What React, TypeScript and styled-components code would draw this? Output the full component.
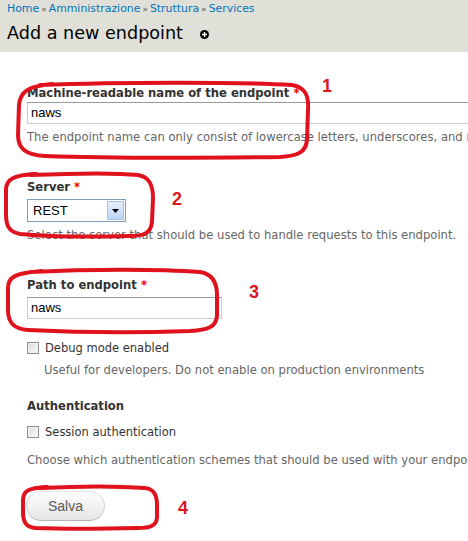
import { createGlobalStyle, styled } from 'styled-components';

const GlobalStyle = createGlobalStyle`
  html, body {
    margin: 0;
    padding: 0;
    background: #fff;
    overflow: hidden;
  }
  body {
    font-family: 'DejaVu Sans', Verdana, sans-serif;
    color: #333;
  }
`;

const Page = styled.div`
  position: relative;
  width: 468px;
  height: 541px;
  overflow: hidden;
`;

const Branding = styled.div`
  background: #e0e0d8;
  height: 52px;
  padding: 2px 0 0 7px;
  box-sizing: border-box;
`;

const Breadcrumb = styled.div`
  font-size: 10.9px;
  line-height: 13px;
  color: #0074bd;
`;

const Sep = styled.span`
  color: #555;
  margin: 0 2px;
  font-size: 9px;
`;

const TitleRow = styled.div`
  display: flex;
  align-items: center;
  margin-top: 5px;
`;

const Title = styled.h1`
  margin: 0;
  font-size: 17.6px;
  font-weight: normal;
  color: #000;
  line-height: 24px;
`;

const AddIcon = styled.svg`
  margin-left: 17px;
  margin-top: 3px;
`;

const Form = styled.div`
  padding: 33px 0 0 27px;
  display: flex;
  flex-direction: column;
  align-items: flex-start;
`;

const Label = styled.div<{ $gap?: number }>`
  font-size: 11.6px;
  font-weight: bold;
  line-height: 16px;
  color: #333;
  margin-top: ${(p) => p.$gap ?? 0}px;
  white-space: nowrap;
`;

const Req = styled.span`
  color: #e00;
`;

const TextBox = styled.div<{ $width: number; $gap: number }>`
  box-sizing: border-box;
  width: ${(p) => p.$width}px;
  height: 22px;
  margin-top: ${(p) => p.$gap}px;
  border: 1px solid #ccc;
  border-top-color: #999;
  background: #fff;
  font-family: 'Liberation Sans', Arial, sans-serif;
  font-size: 13px;
  color: #000;
  line-height: 20px;
  padding-left: 3px;
`;

const Select = styled.div`
  box-sizing: border-box;
  width: 99px;
  height: 23px;
  margin-top: 4px;
  border: 1px solid #7f9db9;
  display: flex;
  align-items: stretch;
  font-family: 'Liberation Sans', Arial, sans-serif;
  font-size: 13px;
  color: #000;
`;

const SelectValue = styled.div`
  flex: 1;
  padding-left: 5px;
  line-height: 21px;
`;

const SelectButton = styled.div`
  width: 15px;
  margin: 1px;
  border: 1px solid #a8c0e8;
  background: linear-gradient(#e6effc, #bcd6f6);
  display: flex;
  align-items: center;
  justify-content: center;
`;

const Desc = styled.div<{ $gap: number; $indent?: number }>`
  font-size: 11.6px;
  line-height: 16px;
  color: #666;
  margin-top: ${(p) => p.$gap}px;
  margin-left: ${(p) => p.$indent ?? 0}px;
  white-space: nowrap;
`;

const CheckRow = styled.label<{ $gap: number }>`
  display: flex;
  align-items: center;
  gap: 6px;
  margin-top: ${(p) => p.$gap}px;
  font-size: 11.5px;
  line-height: 16px;
  color: #333;
  white-space: nowrap;
`;

const CheckBox = styled.span`
  box-sizing: border-box;
  width: 12px;
  height: 12px;
  border: 1px solid #8e8e8e;
  background: linear-gradient(135deg, #dcdcdc, #fafafa);
  box-shadow: inset 0 0 0 1px #f4f4f4;
`;

const SaveButton = styled.button`
  margin-top: 23px;
  margin-left: -1px;
  width: 79px;
  height: 30px;
  border-radius: 15px;
  border: 1px solid #d2d2d2;
  border-top-color: #e4e4e4;
  border-bottom-color: #b4b4b4;
  background: linear-gradient(#fdfdfd, #e6e6e6);
  font-family: 'Liberation Sans', Arial, sans-serif;
  font-size: 14px;
  color: #5a5a5a;
  padding: 0;
`;

const Marks = styled.svg`
  position: absolute;
  left: 0;
  top: 0;
  pointer-events: none;
`;

const loops = [
  'M 40 85 C 120 82, 240 82, 292 85 C 306 87, 309 97, 308 110 L 307 140 C 306 152, 298 156, 280 157 C 200 158, 100 158, 45 156 C 25 155, 18 148, 18 135 L 19 105 C 20 92, 28 86, 52 84',
  'M 30 175 C 80 173, 120 173, 138 175 C 150 177, 153 186, 153 198 L 152 222 C 151 233, 144 236, 130 236 C 90 237, 50 237, 20 234 C 9 232, 6 226, 6 214 L 6 190 C 6 179, 14 175, 36 174',
  'M 30 272 C 90 269, 160 269, 200 272 C 213 274, 217 283, 217 295 L 217 316 C 216 327, 208 330, 190 331 C 130 333, 70 332, 28 330 C 13 329, 8 322, 8 310 L 8 288 C 8 277, 15 273, 42 271',
  'M 40 488 C 80 486, 120 486, 145 488 C 154 489, 157 495, 157 505 L 157 518 C 156 526, 150 528, 138 528 C 100 529, 60 529, 35 528 C 26 527, 23 522, 23 512 L 23 500 C 23 491, 28 488, 47 487',
];

const numbers = [
  { n: '1', x: 322, y: 92 },
  { n: '2', x: 172, y: 205 },
  { n: '3', x: 249, y: 298 },
  { n: '4', x: 178, y: 514 },
];

export default function App() {
  return (
    <Page>
      <GlobalStyle />
      <Branding>
        <Breadcrumb>
          Home<Sep>»</Sep>Amministrazione<Sep>»</Sep>Struttura<Sep>»</Sep>Services
        </Breadcrumb>
        <TitleRow>
          <Title>Add a new endpoint</Title>
          <AddIcon width="9" height="9" viewBox="0 0 9 9">
            <circle cx="4.5" cy="4.5" r="4.5" fill="#000" />
            <path d="M4.5 2v5M2 4.5h5" stroke="#fff" strokeWidth="1.4" />
          </AddIcon>
        </TitleRow>
      </Branding>

      <Form>
        <Label>
          Machine-readable name of the endpoint <Req>*</Req>
        </Label>
        <TextBox $width={460} $gap={1}>naws</TextBox>
        <Desc $gap={5}>
          The endpoint name can only consist of lowercase letters, underscores, and n
        </Desc>

        <Label $gap={34}>
          Server <Req>*</Req>
        </Label>
        <Select>
          <SelectValue>REST</SelectValue>
          <SelectButton>
            <svg width="7" height="4" viewBox="0 0 7 4">
              <path d="M0 0h7L3.5 4z" fill="#000" />
            </svg>
          </SelectButton>
        </Select>
        <Desc $gap={5}>
          Select the server that should be used to handle requests to this endpoint.
        </Desc>

        <Label $gap={34}>
          Path to endpoint <Req>*</Req>
        </Label>
        <TextBox $width={195} $gap={4}>
          naws
        </TextBox>

        <CheckRow $gap={21}>
          <CheckBox />
          Debug mode enabled
        </CheckRow>
        <Desc $gap={6} $indent={17}>
          Useful for developers. Do not enable on production environments
        </Desc>

        <Label $gap={20}>Authentication</Label>
        <CheckRow $gap={10}>
          <CheckBox />
          Session authentication
        </CheckRow>
        <Desc $gap={12}>
          Choose which authentication schemes that should be used with your endpo
        </Desc>

        <SaveButton>Salva</SaveButton>
      </Form>

      <Marks width="468" height="541" viewBox="0 0 468 541">
        {loops.map((d, i) => (
          <path
            key={i}
            d={d}
            fill="none"
            stroke="#e0121d"
            strokeWidth="4"
            strokeLinecap="round"
            strokeLinejoin="round"
          />
        ))}
        {numbers.map((m) => (
          <text
            key={m.n}
            x={m.x}
            y={m.y}
            fill="#d7181f"
            fontFamily="'Liberation Sans', Arial, sans-serif"
            fontSize="18"
            fontWeight="bold"
          >
            {m.n}
          </text>
        ))}
      </Marks>
    </Page>
  );
}
